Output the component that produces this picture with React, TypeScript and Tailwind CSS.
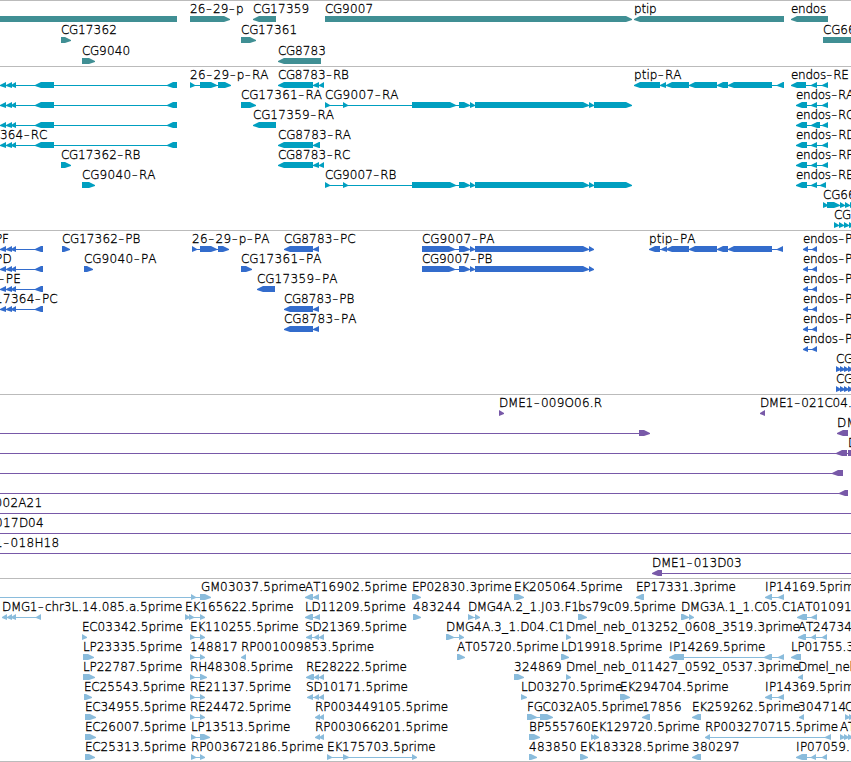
type Span = [number, number];

type Feature = {
  // 1 points right, -1 points left
  dir?: 1 | -1;
  spans?: Span[];
  line?: Span;
  name?: string;
  // label start and end in px, start defaults to the first span
  x?: number;
  end?: number;
};

type TrackData = {
  color: string;
  height: number;
  step: number;
  rows: Feature[][];
};

const fwd = (name: string, end: number, spans: Span[], x?: number): Feature => ({ dir: 1, name, end, spans, x });
const rev = (name: string, end: number, spans: Span[], x?: number): Feature => ({ dir: -1, name, end, spans, x });

const genes: TrackData = {
  color: "#408f94",
  height: 66,
  step: 21,
  rows: [
    [
      rev("", 0, [[-20, 177]]),
      fwd("26-29-p", 243.5, [[190, 230]]),
      rev("CG17359", 309.5, [[253, 276]]),
      fwd("CG9007", 373.5, [[325, 632]]),
      rev("ptip", 656.5, [[634, 784]]),
      rev("endos", 826, [[791, 828]]),
    ],
    [
      fwd("CG17362", 117, [[61, 71]]),
      fwd("CG17361", 297.5, [[241, 256]]),
      fwd("CG66", 856, [[823, 880]]),
    ],
    [fwd("CG9040", 130.5, [[82, 95]]), rev("CG8783", 326, [[278, 321]])],
  ],
};

const rnaLeft: Span[] = [[0, 6], [6, 12], [11, 16], [35, 54], [167, 177]];
const cg9007Rna: Span[] = [[325, 330], [343, 348], [412, 456], [459, 470], [470, 475], [475, 589], [589, 594], [594, 632]];
const endosRna: Span[] = [[796, 807], [811, 817], [822, 828]];

const transcripts: TrackData = {
  color: "#009fc0",
  height: 164,
  step: 20,
  rows: [
    [
      rev("", 0, rnaLeft),
      fwd("26-29-p-RA", 268.5, [[190, 195], [200, 217], [218, 231]]),
      rev("CG8783-RB", 349, [[278, 313], [313, 319], [319, 324]]),
      rev("ptip-RA", 681.5, [[634, 660], [660, 666], [666, 689], [689, 717], [717, 728], [728, 772], [777, 784]]),
      rev("endos-RE", 848.5, [[791, 806], [811, 817], [822, 828]]),
    ],
    [
      rev("", 0, rnaLeft),
      fwd("CG17361-RA", 322, [[241, 256]]),
      fwd("CG9007-RA", 398.5, cg9007Rna),
      rev("endos-RA", 854, endosRna),
    ],
    [
      rev("", 0, rnaLeft),
      rev("CG17359-RA", 334, [[253, 276]]),
      rev("endos-RC", 854, [[796, 807], [811, 820], [822, 828]]),
    ],
    [
      rev("364-RC", 47, rnaLeft, 0),
      rev("CG8783-RA", 351, [[278, 313], [313, 320]]),
      rev("endos-RD", 855, endosRna),
    ],
    [
      fwd("CG17362-RB", 140.5, [[61, 71]]),
      rev("CG8783-RC", 350, [[278, 313], [313, 319], [319, 324]]),
      rev("endos-RF", 853, endosRna),
    ],
    [
      fwd("CG9040-RA", 155.5, [[82, 95]]),
      fwd("CG9007-RB", 396.5, cg9007Rna),
      rev("endos-RB", 854, [[796, 807], [811, 817], [820, 826]]),
    ],
    [fwd("CG66", 856, [[823, 828], [827, 840], [840, 845], [845, 850], [850, 855]])],
    [fwd("CG", 851, [[834, 839], [839, 844], [844, 849], [849, 854]])],
  ],
};

const cdsLeft: Span[] = [[0, 6], [6, 12], [11, 16], [35, 43]];
const cg9007Cds: Span[] = [[422, 455], [459, 470], [470, 475], [475, 589], [589, 594]];
const endosCds = rev("endos-P", 852, [[803, 808], [812, 817]]);
const cgCds = fwd("CG", 853, [[836, 841], [840, 845], [844, 849], [848, 853]]);

const proteins: TrackData = {
  color: "#336ccc",
  height: 164,
  step: 20,
  rows: [
    [
      rev("PF", 9, cdsLeft, -5),
      fwd("CG17362-PB", 140.5, [[62, 70]]),
      fwd("26-29-p-PA", 269.5, [[192, 197], [200, 217], [218, 229]]),
      rev("CG8783-PC", 355.5, [[284, 313], [313, 319]]),
      fwd("CG9007-PA", 494.5, cg9007Cds),
      rev("ptip-PA", 695.5, [[649, 660], [661, 667], [666, 689], [689, 717], [717, 728], [728, 772], [777, 783]]),
      endosCds,
    ],
    [
      rev("PD", 12, cdsLeft, -5),
      fwd("CG9040-PA", 156.5, [[84, 93]]),
      fwd("CG17361-PA", 321.5, [[241, 252]]),
      fwd("CG9007-PB", 492.5, cg9007Cds),
      endosCds,
    ],
    [rev("-PE", 21, cdsLeft, -2), rev("CG17359-PA", 337.5, [[257, 275]]), endosCds],
    [rev("17364-PC", 57.5, cdsLeft, -5), rev("CG8783-PB", 354.5, [[284, 313], [313, 319]]), endosCds],
    [rev("CG8783-PA", 356.5, [[284, 313], [313, 319]]), endosCds],
    [endosCds],
    [cgCds],
    [cgCds],
  ],
};

const bacs: TrackData = {
  color: "#7859a8",
  height: 184,
  step: 20,
  rows: [
    [fwd("DME1-009O06.R", 602, [[499, 504]]), rev("DME1-021C04.", 852, [[760, 765]])],
    [
      { dir: 1, spans: [[639, 650]], line: [0, 640] },
      rev("DM", 857, [[837, 848]]),
    ],
    [
      { dir: -1, spans: [[836, 847]], line: [0, 851] },
      fwd("D", 857, [[848, 858]]),
    ],
    [{ dir: -1, spans: [[832, 843]], line: [0, 840] }],
    [{ dir: -1, spans: [[839, 848]], line: [0, 845] }],
    [{ line: [0, 851], name: "002A21", x: -5.5, end: 42.5 }],
    [{ line: [0, 851], name: "017D04", x: -5, end: 44 }],
    [{ line: [0, 851], name: "1-018H18", x: -5, end: 59.5 }],
    [{ dir: -1, spans: [[652, 662]], line: [655, 851], name: "DME1-013D03", end: 742 }],
  ],
};

const est: Span[] = [[190, 195], [200, 205]];

const ests: TrackData = {
  color: "#8abcdc",
  height: 183,
  step: 20,
  rows: [
    [
      { dir: 1, spans: [[191, 196], [200, 211]], line: [0, 200], name: "GM03037.5prime", x: 201, end: 305.5 },
      rev("AT16902.5prime", 407, [[305, 313], [313, 319]]),
      fwd("EP02830.3prime", 511.5, [[412, 421]]),
      fwd("EK205064.5prime", 622.5, [[514, 524]]),
      rev("EP17331.3prime", 735.5, [[636, 644]]),
      rev("IP14169.5prime", 861.5, [[765, 772], [778, 784]]),
    ],
    [
      rev("DMG1-chr3L.14.085.a.5prime", 182, [[2, 7], [7, 12], [11, 16], [36, 41]]),
      fwd("EK165622.5prime", 293.5, [[185, 190], [189, 194], [200, 205]]),
      rev("LD11209.5prime", 405.5, [[305, 313], [314, 320]]),
      fwd("483244", 461, [[413, 421]]),
      fwd("DMG4A.2_1.J03.F1", 579, [[468, 474], [475, 480]]),
      fwd("bs79c09.5prime", 675.5, [[578, 587]]),
      fwd("DMG3A.1_1.C05.C1", 797.5, [[681, 689], [689, 694]]),
      rev("AT01091", 852, [[797, 807], [811, 817]]),
    ],
    [
      fwd("EC03342.5prime", 183, [[82, 87]]),
      fwd("EK110255.5prime", 298.5, est),
      rev("SD21369.5prime", 406.5, [[306, 312], [314, 319], [319, 324]], 305),
      fwd("DMG4A.3_1.D04.C1", 565, [[446, 454], [459, 464]]),
      fwd("Dmel_neb_013252_0608_3519.3prime", 799.5, [[566, 571]]),
      rev("AT24734", 852, [[798, 806], [811, 816], [822, 827]]),
    ],
    [
      fwd("LP23335.5prime", 182, [[83, 94]]),
      fwd("148817", 238, est),
      rev("RP001009853.5prime", 374, [[241, 246]]),
      fwd("AT05720.5prime", 558.5, [[457, 465]]),
      fwd("LD19918.5prime", 662, [[561, 569]]),
      rev("IP14269.5prime", 765, [[669, 684], [764, 772], [778, 784]]),
      rev("LP01755.3", 854, [[791, 801]]),
    ],
    [
      fwd("LP22787.5prime", 182, [[83, 95]]),
      fwd("RH48308.5prime", 293, [[190, 195], [200, 207]]),
      rev("RE28222.5prime", 406.5, [[306, 314], [314, 319], [319, 324]]),
      fwd("324869", 562, [[514, 524]]),
      fwd("Dmel_neb_011427_0592_0537.3prime", 799.5, [[566, 571]]),
      rev("Dmel_neb", 857, [[798, 803]]),
    ],
    [
      fwd("EC25543.5prime", 185, [[84, 92]]),
      fwd("RE21137.5prime", 291, est),
      rev("SD10171.5prime", 407.5, [[307, 313], [314, 319], [319, 324]], 306),
      fwd("LD03270.5prime", 622, [[521, 527]]),
      fwd("EK294704.5prime", 728.5, [[620, 630]]),
      rev("IP14369.5prime", 861.5, [[765, 772], [778, 784]]),
    ],
    [
      fwd("EC34955.5prime", 186, [[85, 96]]),
      fwd("RE24472.5prime", 291, est),
      rev("RP003449105.5prime", 448, [[315, 320], [319, 324]]),
      fwd("FGC032A05.5prime", 643.5, [[527, 537], [540, 553]]),
      rev("17856", 682, [[642, 650]]),
      rev("EK259262.5prime", 800, [[692, 701]]),
      rev("304714", 846.5, [[799, 804]], 798),
      fwd("C", 853, [[845, 850], [849, 854]]),
    ],
    [
      fwd("EC26007.5prime", 186, [[85, 96]]),
      fwd("LP13513.5prime", 290, [[191, 196], [200, 210]]),
      rev("RP003066201.5prime", 448, [[315, 320], [319, 324]]),
      fwd("BP555760", 591, [[529, 540]]),
      fwd("EK129720.5prime", 699.5, [[591, 596], [594, 599]]),
      rev("RP003270715.5prime", 838, [[705, 710], [825, 831]]),
      fwd("AT", 855, [[840, 845], [844, 849], [848, 853]]),
    ],
    [
      fwd("EC25313.5prime", 186, [[85, 95]]),
      fwd("RP003672186.5prime", 323.5, [[191, 196], [200, 205]]),
      fwd("EK175703.5prime", 435.5, [[327, 332], [343, 349], [412, 417]]),
      fwd("483850", 577, [[529, 537]]),
      fwd("EK183328.5prime", 689, [[580, 588]]),
      rev("380297", 740, [[692, 701]]),
      rev("IP07059.", 850, [[796, 807], [811, 816], [822, 827]]),
    ],
  ],
};

const WIDTHS: Record<string, number> = {
  C: 8.2, G: 9, D: 9, E: 7.4, P: 7.2, R: 8.2, A: 8.2, T: 7.2, L: 6.7, M: 10.2, K: 7.8, I: 4,
  F: 6.9, H: 9, J: 4, S: 7.6, B: 8.2, O: 9.4, "-": 7.4, ".": 4, _: 6.4,
  p: 7.6, r: 5, i: 3.3, m: 11.6, e: 7.2, t: 4.6, n: 7.6, d: 7.6, o: 7.3, s: 6.3, c: 6.6, h: 7.6,
  a: 7.2, b: 7.6, l: 3.3,
};

function glyphPositions(text: string, start: number, end: number) {
  const advances = [...text].map((c) => WIDTHS[c] ?? 7.9);
  const total = advances.reduce((a, b) => a + b, 0);
  const scale = (end - start) / total;
  let x = start;
  return advances.map((a) => {
    const pos = x;
    x += a * scale;
    return pos.toFixed(1);
  }).join(" ");
}

// hyphens are set larger than the letters, so they are moved down to stay centred
function baselineShifts(text: string) {
  return [...text].map((c, i) => {
    if (c === "-") return 1.4;
    return text[i - 1] === "-" ? -1.4 : 0;
  }).join(" ");
}

function Label({ text, start, end, y }: { text: string; start: number; end: number; y: number }) {
  return (
    <text
      x={glyphPositions(text, start, end)}
      y={y}
      dy={baselineShifts(text)}
      className="fill-black stroke-black [stroke-width:0.3px]"
    >
      {text.split(/(-)/).filter(Boolean).map((part, i) =>
        part === "-" ? (
          <tspan key={i} className="text-[18px] [stroke-width:0px]">-</tspan>
        ) : (
          part
        )
      )}
    </text>
  );
}

function arrow([a, b]: Span, y: number, dir: number) {
  const head = Math.min(6, b - a);
  if (dir > 0) {
    return `M${a} ${y}H${b - head}L${b} ${y + 3}V${y + 4}L${b - head} ${y + 6}H${a}Z`;
  }
  return `M${b} ${y}H${a + head}L${a} ${y + 3}V${y + 4}L${a + head} ${y + 6}H${b}Z`;
}

function FeatureGlyph({ feature, top }: { feature: Feature; top: number }) {
  const { dir = 1, spans = [], name, end = 0 } = feature;
  const y = top + 15;
  const line = feature.line ?? (spans.length > 1 ? [spans[0][0], spans[spans.length - 1][1]] : null);
  const start = feature.x ?? spans[0]?.[0] ?? 0;

  return (
    <g>
      {line && <rect x={line[0]} y={y + 3} width={line[1] - line[0]} height={1} />}
      {spans.map((span, i) => (
        <path key={i} d={arrow(span, y, dir)} />
      ))}
      {name && <Label text={name} start={start} end={end} y={top + 12} />}
    </g>
  );
}

function Track({ track }: { track: TrackData }) {
  return (
    <section className="border-t border-[#bbbbbb]">
      <svg
        width={851}
        height={track.height - 1}
        fill={track.color}
        className="block font-['DejaVu_Sans',sans-serif] text-[12px] font-extralight"
      >
        {track.rows.map((row, r) =>
          row.map((feature, i) => (
            <FeatureGlyph key={`${r}-${i}`} feature={feature} top={r * track.step} />
          ))
        )}
      </svg>
    </section>
  );
}

export default function App() {
  return (
    <main className="w-[851px] h-[762px] overflow-hidden bg-white border-b border-[#bbbbbb]">
      <Track track={genes} />
      <Track track={transcripts} />
      <Track track={proteins} />
      <Track track={bacs} />
      <Track track={ests} />
    </main>
  );
}
